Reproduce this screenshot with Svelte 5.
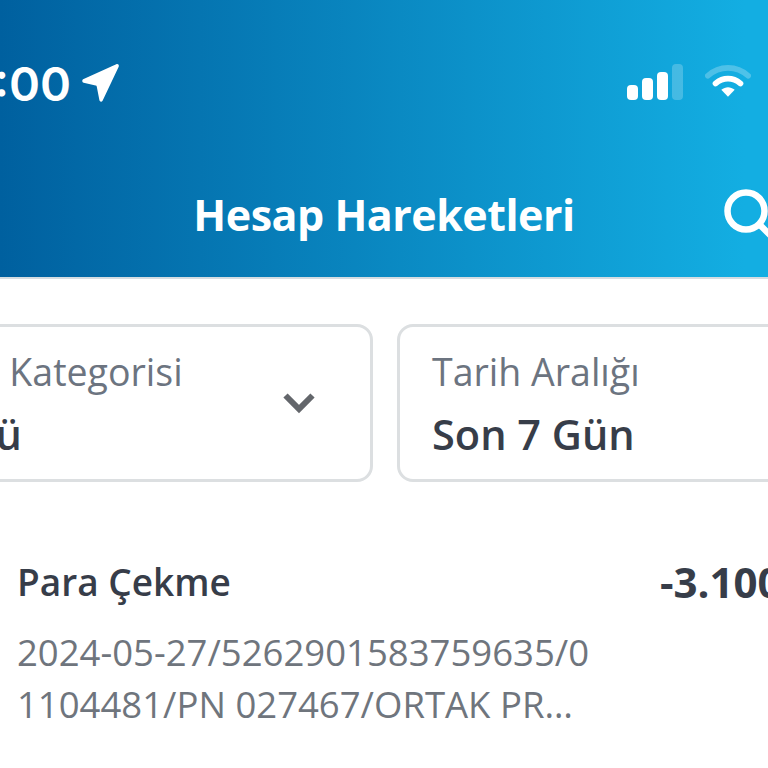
<script>
  const filters = [
    { label: "İşlem Kategorisi", value: "Tümü", chevron: true },
    { label: "Tarih Aralığı", value: "Son 7 Gün", chevron: false },
  ];
  const tx = {
    title: "Para Çekme",
    amount: "-3.100,00 TL",
    desc: "2024-05-27/5262901583759635/01104481/PN 027467/ORTAK PROVIZYON",
  };
</script>

<div class="page">
  <header class="top">
    <div class="status">
      <div class="clock">
        <span class="time">9:00</span>
        <svg class="arrow" viewBox="0 0 38 38" width="40" height="40">
          <path d="M2 15.500 33.500 1.200c1.600-.7 3 .7 2.300 2.300L20.500 35.800c-.7 1.400-2.700 1.200-3-.3L15 22.500c-.2-.7-.5-1-1.200-1.100L2.500 18.800c-1.500-.3-1.800-2.600-.5-3.300z" fill="#fff"/>
        </svg>
      </div>
      <div class="signals">
        <div class="bars">
          <span class="bar b1"></span>
          <span class="bar b2"></span>
          <span class="bar b3"></span>
          <span class="bar b4"></span>
        </div>
        <svg class="wifi" viewBox="0 0 48 36" width="46" height="35">
          <path d="M3 12C15 1 33 1 45 12" fill="none" stroke="#fff" stroke-opacity="0.25" stroke-width="6" stroke-linecap="round"/>
          <path d="M11 20c8-6.500 18-6.500 26 0" fill="none" stroke="#fff" stroke-width="6" stroke-linecap="round"/>
          <path d="M17 26.500c4.500-3.500 9.500-3.500 14 0L24 34z" fill="#fff"/>
        </svg>
      </div>
    </div>
    <div class="titlebar">
      <h1>Hesap Hareketleri</h1>
      <svg class="search" viewBox="0 0 60 60" width="60" height="60">
        <circle cx="22" cy="22" r="18.500" fill="none" stroke="#fff" stroke-width="6.500"/>
        <path d="M36 36 50 50" stroke="#fff" stroke-width="6.500" stroke-linecap="round"/>
      </svg>
    </div>
  </header>

  <div class="filters">
    {#each filters as f}
      <div class="filter">
        <div class="filter-text">
          <span class="label">{f.label}</span>
          <span class="value">{f.value}</span>
        </div>
        {#if f.chevron}
          <svg class="chevron" viewBox="0 0 34 22" width="34" height="22">
            <path d="M3.500 3.500 17 17 30.500 3.500" fill="none" stroke="#63666b" stroke-width="6"/>
          </svg>
        {/if}
      </div>
    {/each}
  </div>

  <div class="tx">
    <div class="tx-head">
      <span class="tx-title">{tx.title}</span>
      <span class="tx-amount">{tx.amount}</span>
    </div>
    <p class="tx-desc">{tx.desc}</p>
  </div>
</div>

<style>
  :global(body) {
    background: #fff;
  }
  .page {
    width: 768px;
    height: 768px;
    overflow: hidden;
    font-family: "Open Sans", "Noto Sans", sans-serif;
    background: #fff;
  }
  .top {
    height: 277px;
    background: linear-gradient(90deg, #00609f 0%, #13aee2 97%);
    border-bottom: 2px solid #d5dde2;
    color: #fff;
    box-sizing: content-box;
  }
  .status {
    height: 169px;
    display: flex;
    justify-content: space-between;
    align-items: flex-start;
    padding-right: 17px;
    padding-top: 60px;
    box-sizing: border-box;
  }
  .clock {
    display: flex;
    align-items: center;
    gap: 10px;
    margin-left: -36px;
  }
  .time {
    font-size: 47px;
    line-height: 48px;
    font-weight: 600;
    font-family: "Inter", sans-serif;
  }
  .arrow {
    display: block;
    margin-top: -2px;
  }
  .signals {
    display: flex;
    align-items: flex-start;
    gap: 22px;
  }
  .bars {
    display: flex;
    align-items: flex-end;
    gap: 4px;
    height: 37px;
    margin-top: 3px;
  }
  .bar {
    width: 11px;
    border-radius: 4px;
    background: #fff;
  }
  .b1 { height: 15px; }
  .b2 { height: 22px; }
  .b3 { height: 28px; }
  .b4 { height: 36px; background: rgba(255, 255, 255, 0.22); }
  .wifi {
    display: block;
    margin-top: 4px;
  }
  .titlebar {
    height: 92px;
    position: relative;
    display: flex;
    align-items: center;
    justify-content: center;
  }
  h1 {
    margin: 0;
    font-size: 43px;
    line-height: 92px;
    font-weight: 700;
    letter-spacing: -0.5px;
  }
  .search {
    position: absolute;
    left: 724px;
    top: 20px;
  }
  .filters {
    display: flex;
    gap: 24px;
    margin: 45px 0 0 -118px;
    width: 1000px;
  }
  .filter {
    height: 158px;
    border: 3px solid #dcdfe1;
    border-radius: 16px;
    box-sizing: border-box;
    display: flex;
    align-items: center;
    justify-content: space-between;
    padding: 0 54px 0 21px;
    flex: none;
    width: 491px;
  }
  .filter + .filter {
    width: 400px;
    padding-left: 32px;
  }
  .filter-text {
    display: flex;
    flex-direction: column;
    padding-top: 2px;
  }
  .label {
    font-size: 37.500px;
    line-height: 60px;
    color: #6c7480;
    margin-top: -2px;
  }
  .value {
    font-size: 41.500px;
    line-height: 60px;
    font-weight: 600;
    color: #373d49;
    margin-top: 2px;
  }
  .chevron {
    display: block;
  }
  .tx {
    padding: 74px 0 0 17px;
  }
  .tx-head {
    display: flex;
  }
  .tx-title {
    flex: none;
    width: 643px;
    font-size: 37px;
    line-height: 52px;
    font-weight: 600;
    color: #373d49;
  }
  .tx-amount {
    flex: none;
    font-size: 42px;
    line-height: 52px;
    font-weight: 700;
    color: #373d49;
    white-space: nowrap;
  }
  .tx-desc {
    margin: 18px 0 0;
    width: 574px;
    font-size: 36.500px;
    line-height: 52px;
    color: #6f757d;
    word-break: break-all;
    display: -webkit-box;
    -webkit-box-orient: vertical;
    -webkit-line-clamp: 2;
    overflow: hidden;
  }
</style>
